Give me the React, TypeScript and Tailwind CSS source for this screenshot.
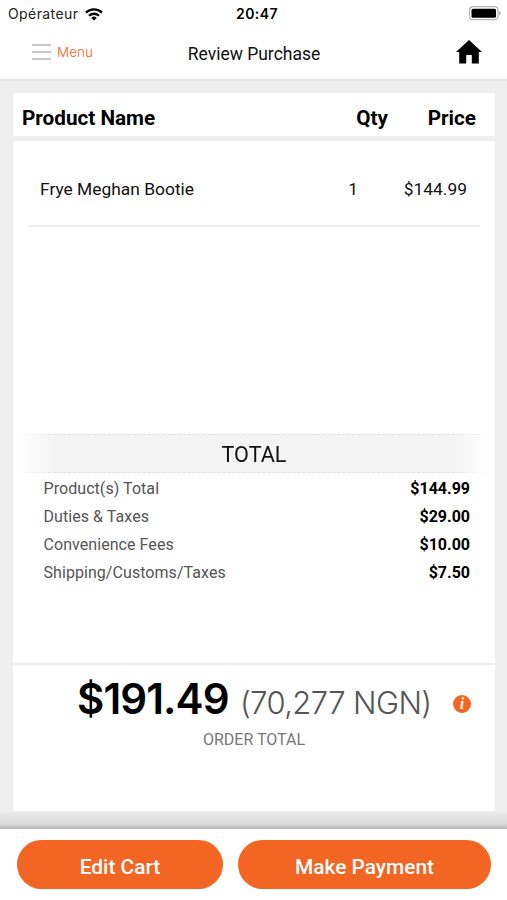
import { useState } from 'react';

interface Fee {
  label: string;
  amount: string;
}

const fees: Fee[] = [
  { label: 'Product(s) Total', amount: '$144.99' },
  { label: 'Duties & Taxes', amount: '$29.00' },
  { label: 'Convenience Fees', amount: '$10.00' },
  { label: 'Shipping/Customs/Taxes', amount: '$7.50' },
];

function StatusBar() {
  return (
    <div className="grid h-[28px] grid-cols-3 items-center pl-[8px] pr-[6px] font-['Inter',sans-serif] text-black">
      <div className="flex items-center gap-[7px]">
        <span className="text-[14px] leading-[28px] tracking-[0.4px] text-[#222]">Opérateur</span>
        <svg width="18" height="13" viewBox="0 0 18 13" fill="none" stroke="black" strokeWidth="2.3">
          <path d="M1 4.6a11.3 11.3 0 0 1 16 0" />
          <path d="M4 7.8a7.1 7.1 0 0 1 10 0" />
          <path d="M9 12.6 6.2 9.9a4 4 0 0 1 5.6 0z" fill="black" stroke="none" />
        </svg>
      </div>
      <span className="pl-[5px] text-center text-[14px] font-semibold leading-[26px] tracking-[0.4px]">20:47</span>
      <svg className="justify-self-end" width="33" height="16" viewBox="0 0 33 16">
        <rect x="1.5" y="0.7" width="28.5" height="13" rx="3.5" fill="white" stroke="#b4b4b4" strokeWidth="1.2" />
        <rect x="3.5" y="2.7" width="24.5" height="9" rx="1.5" fill="black" />
        <path d="M31.2 5v4.6q1.5-.6 1.5-2.3T31.2 5z" fill="#aaa" />
      </svg>
    </div>
  );
}

function NavBar() {
  return (
    <header className="grid h-[53px] grid-cols-3 items-center border-b-2 border-[#e2e2e2] pl-[31px] pr-[25px]">
      <button className="flex items-center gap-[6px] pb-[3px]">
        <svg width="20" height="16" viewBox="0 0 20 16" stroke="#c8c8c8" strokeWidth="2">
          <path d="M1 1h19M1 8h19M1 15h19" />
        </svg>
        <span className="font-['Inter',sans-serif] text-[13.5px] leading-[20px] font-light text-[#f26522]">Menu</span>
      </button>
      <h1 className="whitespace-nowrap pr-[5px] pt-[1px] text-center text-[17.5px] text-[#111]">Review Purchase</h1>
      <button className="justify-self-end pb-[3px]" aria-label="Home">
        <svg width="26" height="24" viewBox="0 0 26 24" fill="black">
          <path d="M13 0 0 12h3.2v11.5h7V15h5.6v8.5h7V12H26z" />
        </svg>
      </button>
    </header>
  );
}

export default function App() {
  const [items] = useState([{ name: 'Frye Meghan Bootie', qty: 1, price: '$144.99' }]);

  return (
    <div className="flex h-[900px] w-[507px] flex-col overflow-hidden bg-white font-['Roboto',sans-serif] text-black">
      <StatusBar />
      <NavBar />

      <main className="flex h-[748px] flex-col bg-[#eeeeee] pl-[13px] pr-[12px] pt-[12px]">
        {/* Table header */}
        <div className="mb-[5px] flex h-[43px] items-center bg-white pl-[9px] pr-[19px] pt-[8px] text-[20.7px] font-bold">
          <span className="flex-1">Product Name</span>
          <span>Qty</span>
          <span className="w-[88px] text-right">Price</span>
        </div>

        {/* Items and fees */}
        <section className="flex h-[522px] flex-col bg-white">
          {items.map((item) => (
            <div
              key={item.name}
              className="mx-[15px] flex h-[86px] items-center border-b-2 border-[#eeeeee] pl-[12px] pr-[13px] pt-[13px] text-[17.4px] text-[#111]"
            >
              <span className="flex-1">{item.name}</span>
              <span>{item.qty}</span>
              <span className="w-[109px] text-right">{item.price}</span>
            </div>
          ))}

          <div className="mx-[5px] mt-[207px] h-[39px] [mask-image:linear-gradient(to_right,transparent,black_8%,black_92%,transparent)]">
            <h2 className="flex h-full items-center justify-center border-y border-dashed border-[#dedede] bg-[#f4f4f4] pt-[4px] text-[21.6px] text-[#111]">
              TOTAL
            </h2>
          </div>

          <ul className="pl-[30.5px] pr-[25px] pt-[2px]">
            {fees.map((fee) => (
              <li key={fee.label} className="flex h-[28px] items-center justify-between text-[16px]">
                <span className="tracking-[0.06px] text-[#555]">{fee.label}</span>
                <span className="font-bold">{fee.amount}</span>
              </li>
            ))}
          </ul>
        </section>

        {/* Order total */}
        <section className="mt-[2px] h-[146px] bg-white pt-[9px]">
          <div className="flex h-[50px] items-baseline whitespace-nowrap pl-[64px]">
            <span className="w-[163px] font-['Inter',sans-serif] text-[42px] font-semibold leading-[50px] tracking-[-0.9px]">$191.49</span>
            <span className="w-[200px] font-['Inter',sans-serif] text-[31px] font-light tracking-[-0.6px] text-[#555]">(70,277 NGN)</span>
            <button
              className="ml-[13px] mt-[9px] size-[18px] self-center rounded-full bg-[#f26522] text-center font-['Liberation_Serif',serif] text-[16px] font-bold italic leading-[18px] text-white"
              aria-label="Exchange rate info"
            >
              i
            </button>
          </div>
          <p className="mt-[5px] text-center text-[16px] leading-[22px] text-[#777]">ORDER TOTAL</p>
        </section>

        <div className="-ml-[13px] -mr-[12px] mt-auto h-[17px] bg-linear-to-b from-[#eaeaea] via-[#dcdcdc] via-70% to-[#b4b4b4]" />
      </main>

      <footer className="flex h-[71px] gap-[15px] bg-white pl-[17px] pr-[16px] pt-[11px] text-[20.9px] font-medium text-white">
        <button className="h-[49px] w-[206px] rounded-full bg-[#f26522] pt-[6px]">Edit Cart</button>
        <button className="h-[49px] flex-1 rounded-full bg-[#f26522] pt-[6px]">Make Payment</button>
      </footer>
    </div>
  );
}
